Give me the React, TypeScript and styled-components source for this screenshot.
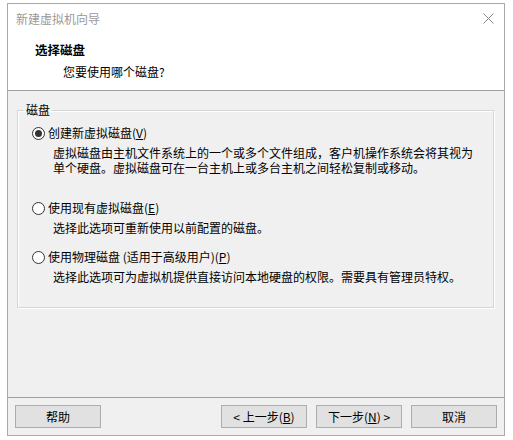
import styled, { createGlobalStyle } from "styled-components";

const GlobalStyle = createGlobalStyle`
  html, body {
    margin: 0;
    padding: 0;
    background: #ffffff;
  }
  body {
    font-family: "Noto Sans CJK SC", "Liberation Sans", sans-serif;
    font-size: 12px;
    color: #000;
  }
`;

type Choice = {
  label: string;
  key: string;
  suffix?: string;
  lines: string[];
  checked?: boolean;
  gap: number;
};

const choices: Choice[] = [
  {
    label: "创建新虚拟磁盘(",
    key: "V",
    suffix: ")",
    lines: [
      "虚拟磁盘由主机文件系统上的一个或多个文件组成，客户机操作系统会将其视为",
      "单个硬盘。虚拟磁盘可在一台主机上或多台主机之间轻松复制或移动。",
    ],
    checked: true,
    gap: 0,
  },
  {
    label: "使用现有虚拟磁盘(",
    key: "E",
    suffix: ")",
    lines: ["选择此选项可重新使用以前配置的磁盘。"],
    gap: 25,
  },
  {
    label: "使用物理磁盘 (适用于高级用户)(",
    key: "P",
    suffix: ")",
    lines: ["选择此选项可为虚拟机提供直接访问本地硬盘的权限。需要具有管理员特权。"],
    gap: 14,
  },
];

function App() {
  return (
    <>
      <GlobalStyle />
      <Window>
        <TitleBar>
          <Title>新建虚拟机向导</Title>
          <CloseButton aria-label="关闭">
            <svg width="11" height="11" viewBox="0 0 11 11">
              <path d="M0.5 0.5 L10.5 10.5 M10.5 0.5 L0.5 10.5" stroke="#8a8a8a" strokeWidth="1" fill="none" />
            </svg>
          </CloseButton>
        </TitleBar>
        <Header>
          <Heading>选择磁盘</Heading>
          <Subheading>您要使用哪个磁盘?</Subheading>
        </Header>
        <Body>
          <GroupBox>
            <Legend>磁盘</Legend>
            {choices.map((c) => (
              <Option key={c.key} $gap={c.gap}>
                <RadioRow>
                  <Radio $checked={!!c.checked} />
                  <span>
                    {c.label}
                    <u>{c.key}</u>
                    {c.suffix}
                  </span>
                </RadioRow>
                <Description>
                  {c.lines.map((l) => (
                    <Line key={l}>{l}</Line>
                  ))}
                </Description>
              </Option>
            ))}
          </GroupBox>
        </Body>
        <Footer>
          <Button>帮助</Button>
          <Spacer />
          <Button>
            &lt; 上一步(<u>B</u>)
          </Button>
          <Button>
            下一步(<u>N</u>) &gt;
          </Button>
          <Button>取消</Button>
        </Footer>
      </Window>
    </>
  );
}

export default App;

const Window = styled.div`
  margin: 3px 0 0 7px;
  width: 498px;
  height: 433px;
  box-sizing: border-box;
  border: 1px solid #a9a9a9;
  display: flex;
  flex-direction: column;
  background: #fff;
`;

const TitleBar = styled.div`
  height: 29px;
  display: flex;
  align-items: center;
  justify-content: space-between;
  padding: 0 10px 0 8px;
`;

const Title = styled.span`
  color: #999;
  font-size: 12px;
`;

const CloseButton = styled.span`
  display: flex;
  align-items: center;
  margin-top: -1px;
`;

const Header = styled.div`
  padding: 9px 0 10px 27px;
  border-bottom: 1px solid #a0a0a0;
`;

const Heading = styled.div`
  font-weight: bold;
  font-size: 12.5px;
  line-height: 16px;
`;

const Subheading = styled.div`
  line-height: 16px;
  margin: 6px 0 0 28px;
`;

const Body = styled.div`
  flex: 1;
  background: #f0f0f0;
  padding: 11px 10px 0 9px;
`;

const GroupBox = styled.fieldset`
  margin: 0;
  padding: 7px 14px 23px 14px;
  border: 1px solid #d5d5d5;
  box-shadow: inset 1px 1px 0 #fff, 1px 1px 0 #fff;
  min-width: 0;
`;

const Legend = styled.legend`
  padding: 0 2px;
  margin-left: -8px;
  line-height: 16px;
  margin-top: 4px;
`;

const Option = styled.div<{ $gap: number }>`
  margin-top: ${(p) => p.$gap}px;
`;

const RadioRow = styled.div`
  display: flex;
  align-items: center;
  gap: 3px;
  line-height: 16px;
`;

const Radio = styled.span<{ $checked: boolean }>`
  width: 13px;
  height: 13px;
  box-sizing: border-box;
  border: 1px solid #333;
  border-radius: 50%;
  background: #fff;
  display: flex;
  align-items: center;
  justify-content: center;
  &::after {
    content: "";
    width: 7px;
    height: 7px;
    border-radius: 50%;
    background: ${(p) => (p.$checked ? "#333" : "transparent")};
  }
`;

const Description = styled.div`
  margin: 4px 0 0 21px;
`;

const Line = styled.div`
  height: 15px;
  line-height: 15px;
  overflow: visible;
`;

const Footer = styled.div`
  border-top: 1px solid #a0a0a0;
  background: #f0f0f0;
  padding: 7px;
  display: flex;
  gap: 9px;
`;

const Spacer = styled.div`
  flex: 1;
`;

const Button = styled.button`
  width: 86px;
  height: 23px;
  padding: 0;
  background: #e1e1e1;
  border: 1px solid #adadad;
  font-family: inherit;
  font-size: 12px;
  color: #000;
`;
